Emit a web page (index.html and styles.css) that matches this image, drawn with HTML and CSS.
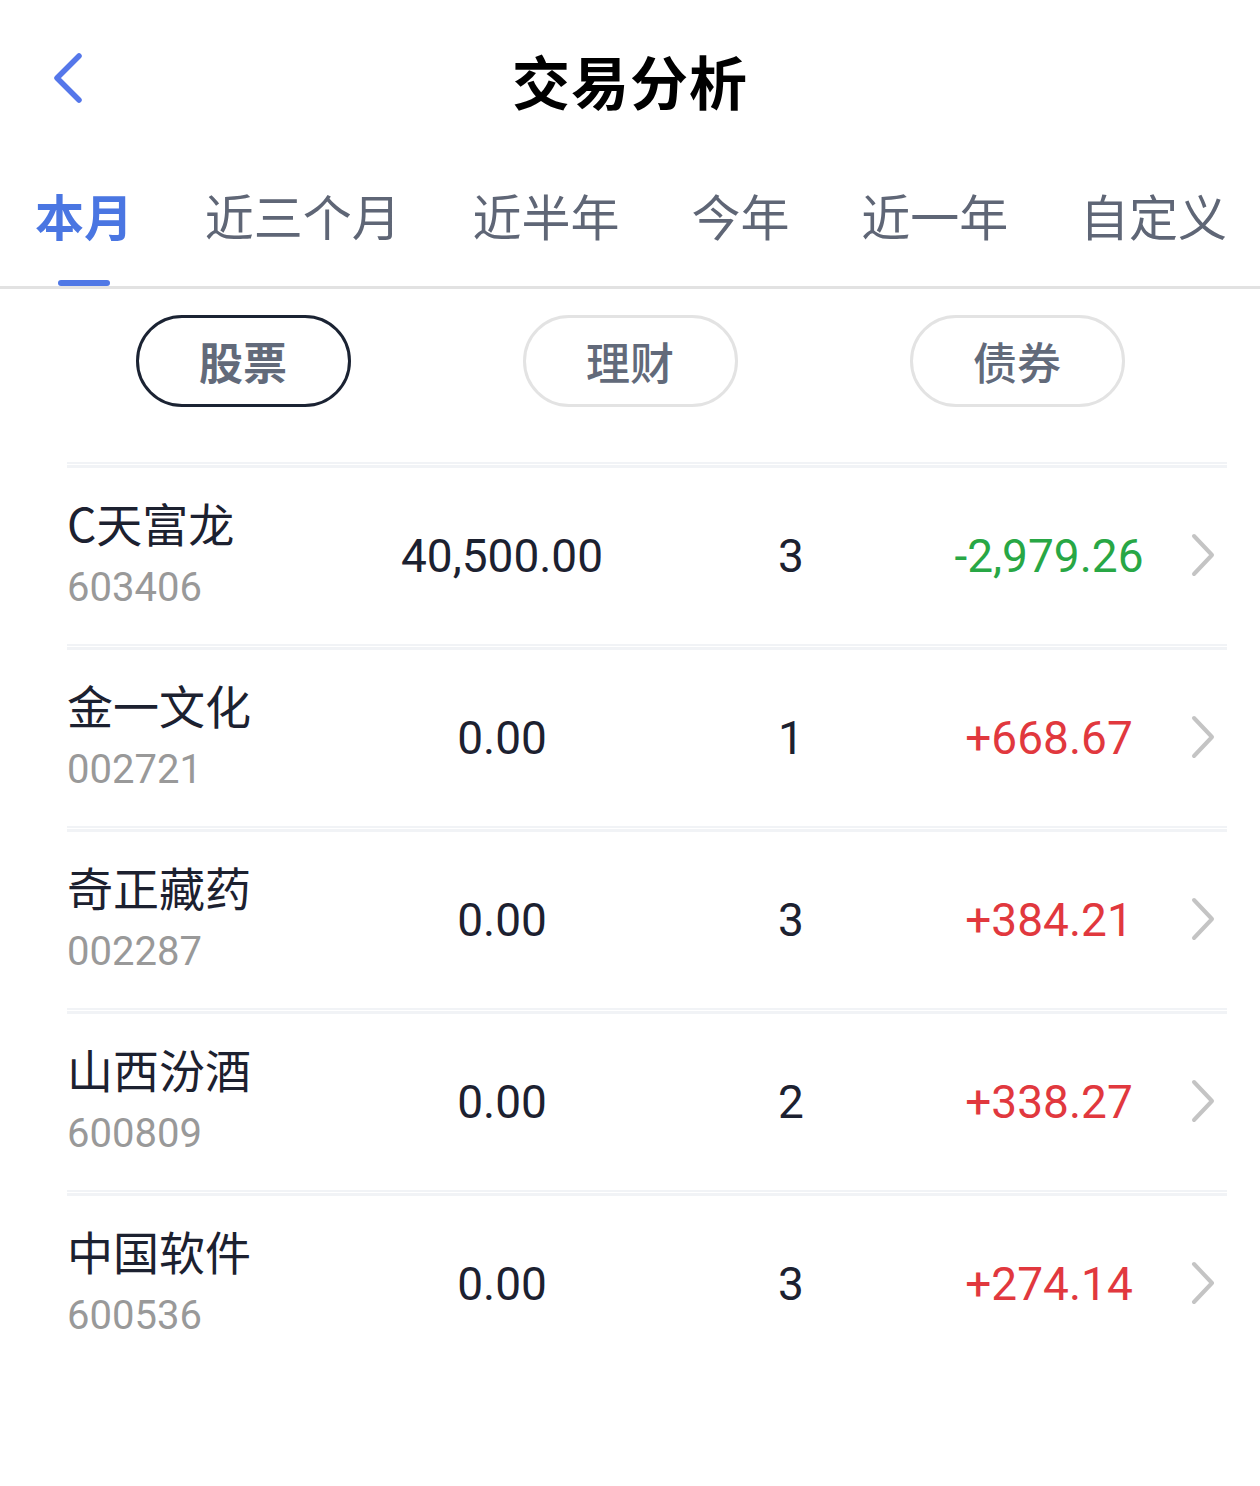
FILE: index.html
```html
<!DOCTYPE html>
<html lang="zh-CN">
  <head>
    <meta charset="UTF-8" />
    <meta name="viewport" content="width=device-width, initial-scale=1.0" />
    <title>交易分析</title>
    <link rel="stylesheet" href="styles.css">
  </head>
  <body>
    <div class="page">
      <div class="header">
        <div class="back">
          <svg width="40" height="56" viewBox="0 0 40 56">
            <polyline points="27,4 5,26 27,48" fill="none" stroke="#5577ea" stroke-width="5.5" stroke-linecap="round" stroke-linejoin="round" />
          </svg>
        </div>
        <h1 class="title">交易分析</h1>
      </div>

      <div class="tabs">
        <div class="tab active">本月<span class="bar"></span></div>
        <div class="tab">近三个月<span class="bar"></span></div>
        <div class="tab">近半年<span class="bar"></span></div>
        <div class="tab">今年<span class="bar"></span></div>
        <div class="tab">近一年<span class="bar"></span></div>
        <div class="tab">自定义<span class="bar"></span></div>
      </div>

      <div class="pills">
        <div class="pill active">股票</div>
        <div class="pill">理财</div>
        <div class="pill">债券</div>
      </div>

      <div class="list" id="list"></div>
    </div>

    <script>
      const stocks = [
        { name: "C天富龙", code: "603406", amount: "40,500.00", count: 3, profit: "-2,979.26" },
        { name: "金一文化", code: "002721", amount: "0.00", count: 1, profit: "+668.67" },
        { name: "奇正藏药", code: "002287", amount: "0.00", count: 3, profit: "+384.21" },
        { name: "山西汾酒", code: "600809", amount: "0.00", count: 2, profit: "+338.27" },
        { name: "中国软件", code: "600536", amount: "0.00", count: 3, profit: "+274.14" },
      ];
      const list = document.getElementById("list");
      stocks.forEach((s) => {
        const cls = s.profit.startsWith("-") ? "down" : "up";
        list.innerHTML += `
          <div class="sep"></div>
          <div class="row">
            <div class="col-name">
              <div class="name">${s.name}</div>
              <div class="code">${s.code}</div>
            </div>
            <div class="col-amount">${s.amount}</div>
            <div class="col-count">${s.count}</div>
            <div class="col-profit ${cls}">${s.profit}</div>
            <div class="col-arrow">
              <svg width="28" height="48" viewBox="0 0 28 48">
                <polyline points="5,4 23,23 5,42" fill="none" stroke="#c4c4c4" stroke-width="4" stroke-linecap="round" stroke-linejoin="round" />
              </svg>
            </div>
          </div>`;
      });
    </script>
  </body>
</html>
```

FILE: styles.css
```css
body {
  margin: 0;
  background: #ffffff;
  font-family: Roboto, "Noto Sans CJK SC", sans-serif;
  color: #1c2130;
}
.page {
  width: 1260px;
}
.header {
  position: relative;
  height: 160px;
  display: flex;
  align-items: center;
  justify-content: center;
}
.back {
  position: absolute;
  left: 52px;
  top: 52px;
}
.back svg {
  display: block;
}
.title {
  margin: 0;
  font-family: "Noto Sans CJK SC", sans-serif;
  font-size: 58px;
  font-weight: 700;
  color: #000000;
  letter-spacing: 1px;
}
.tabs {
  display: flex;
  justify-content: space-between;
  padding: 25px 33px 0 35px;
  border-bottom: 3px solid #e2e2e2;
}
.tab {
  display: flex;
  flex-direction: column;
  align-items: center;
  font-family: "Noto Sans CJK SC", sans-serif;
  font-size: 49px;
  line-height: 60px;
  color: #5f6676;
}
.tab .bar {
  width: 52px;
  height: 6px;
  margin-top: 35px;
  border-radius: 3px;
  background: transparent;
}
.tab.active {
  color: #4a76e2;
  font-weight: 700;
}
.tab.active .bar {
  background: #4f78e6;
}
.pills {
  display: flex;
  justify-content: center;
  gap: 172px;
  margin-top: 26px;
  margin-bottom: 55px;
}
.pill {
  box-sizing: border-box;
  width: 215px;
  height: 92px;
  border: 3px solid #e3e3e3;
  border-radius: 46px;
  display: flex;
  align-items: center;
  justify-content: center;
  font-family: "Noto Sans CJK SC", sans-serif;
  font-size: 44px;
  font-weight: 500;
  color: #626a7a;
}
.pill.active {
  border-color: #1b2333;
  font-weight: 700;
}
.list {
  margin: 0 33px 0 67px;
}
.sep {
  height: 1px;
  border-top: 2px solid #f1f3f6;
  border-bottom: 3px solid #f1f3f6;
}
.row {
  display: flex;
  align-items: center;
  height: 176px;
}
.col-name {
  width: 293px;
  margin-top: -4px;
}
.name {
  font-family: "Noto Sans CJK SC", sans-serif;
  font-size: 46px;
  line-height: 60px;
  color: #1c2130;
}
.code {
  font-size: 40px;
  line-height: 56px;
  margin-top: 8px;
  color: #999999;
}
.col-amount {
  width: 284px;
  text-align: center;
  font-size: 46px;
}
.col-count {
  width: 294px;
  text-align: center;
  font-size: 46px;
}
.col-profit {
  width: 222px;
  display: flex;
  justify-content: center;
  font-size: 46px;
  white-space: nowrap;
}
.col-profit.up {
  color: #e1383e;
}
.col-profit.down {
  color: #28a745;
}
.col-arrow {
  width: 67px;
  display: flex;
  justify-content: flex-end;
  padding-right: 10px;
  box-sizing: border-box;
}
.col-arrow svg {
  display: block;
}
```
